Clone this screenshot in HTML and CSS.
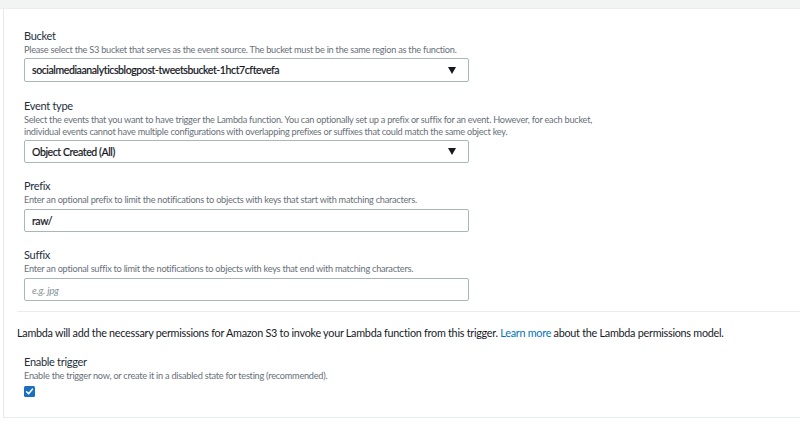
FILE: index.html
```html
<!DOCTYPE html>
<html>
<head>
<meta charset="utf-8">
<link rel="stylesheet" href="styles.css">
</head>
<body>
<div class="topband"></div>
<div class="panel">
  <div class="fields">
    <div class="field f-bucket">
      <div class="label">Bucket</div>
      <div class="desc">Please select the S3 bucket that serves as the event source. The bucket must be in the same region as the function.</div>
      <div class="select">
        <span class="value">socialmediaanalyticsblogpost-tweetsbucket-1hct7cftevefa</span>
        <span class="arrow"></span>
      </div>
    </div>
    <div class="field f-event">
      <div class="label">Event type</div>
      <div class="desc">Select the events that you want to have trigger the Lambda function. You can optionally set up a prefix or suffix for an event. However, for each bucket,<br>individual events cannot have multiple configurations with overlapping prefixes or suffixes that could match the same object key.</div>
      <div class="select">
        <span class="value">Object Created (All)</span>
        <span class="arrow"></span>
      </div>
    </div>
    <div class="field f-prefix">
      <div class="label">Prefix</div>
      <div class="desc">Enter an optional prefix to limit the notifications to objects with keys that start with matching characters.</div>
      <div class="input"><span class="value">raw/</span></div>
    </div>
    <div class="field f-suffix">
      <div class="label">Suffix</div>
      <div class="desc">Enter an optional suffix to limit the notifications to objects with keys that end with matching characters.</div>
      <div class="input"><span class="placeholder">e.g. jpg</span></div>
    </div>
  </div>
  <div class="perm">
    <p class="perm-text">Lambda will add the necessary permissions for Amazon S3 to invoke your Lambda function from this trigger. <a class="link">Learn more</a> about the Lambda permissions model.</p>
    <div class="field f-enable">
      <div class="label">Enable trigger</div>
      <div class="desc">Enable the trigger now, or create it in a disabled state for testing (recommended).</div>
      <div class="checkbox">
        <svg width="11" height="11" viewBox="0 0 11 11"><rect x="0" y="0" width="11" height="11" rx="1.5" fill="#1a6fc0"/><path d="M2.6 5.8 L4.6 7.8 L8.4 3.2" fill="none" stroke="#fff" stroke-width="1.6" stroke-linecap="round" stroke-linejoin="round"/></svg>
      </div>
    </div>
  </div>
</div>
```
FILE: styles.css
```css
html, body {
  margin: 0;
  padding: 0;
  background: #ffffff;
}
body {
  font-family: Lato, "Open Sans", "Liberation Sans", sans-serif;
  color: #232f3e;
  width: 800px;
  height: 424px;
  overflow: hidden;
}
.topband {
  height: 8px;
  background: #f2f3f3;
  border-bottom: 1px solid #eceeee;
}
.panel {
  margin-left: 3px;
  border-left: 1px solid #e6e9e9;
  border-bottom: 1px solid #eaeded;
  height: 409px;
  box-sizing: border-box;
}
.fields {
  margin-left: 13px;
  padding-left: 7px;
  padding-top: 20px;
  padding-bottom: 10px;
  border-bottom: 1px solid #eaeded;
}
.field {
  display: flex;
  flex-direction: column;
}
.label {
  font-size: 11px;
  line-height: 14px;
  letter-spacing: -0.3px;
  color: #232f3e;
}
.desc {
  font-size: 9.2px;
  line-height: 12px;
  letter-spacing: -0.25px;
  color: #687078;
  margin-top: 1px;
}
.select, .input {
  width: 445px;
  height: 23px;
  box-sizing: border-box;
  border: 1px solid #aab7b8;
  border-radius: 2px;
  margin-top: 3px;
  display: flex;
  align-items: center;
  padding: 0 8px 0 7px;
  background: #fff;
}
.f-bucket .select { margin-top: 2px; height: 24px; }
.f-event .select { margin-top: 2px; }
.value {
  font-size: 10.5px;
  font-weight: 500;
  letter-spacing: -0.4px;
  -webkit-text-stroke: 0.15px #16191f;
  color: #16191f;
  flex: 1;
}
.placeholder {
  font-size: 10px;
  font-style: italic;
  letter-spacing: -0.3px;
  color: #879596;
}
.arrow {
  width: 0;
  height: 0;
  border-left: 4.5px solid transparent;
  border-right: 4.5px solid transparent;
  border-top: 7px solid #16191f;
  margin-right: 4px;
}
.f-event { margin-top: 17px; }
.f-prefix { margin-top: 16px; }
.f-suffix { margin-top: 16px; }
.perm {
  margin-left: 13px;
  padding-top: 14px;
}
.perm-text {
  margin: 0;
  font-size: 10.8px;
  line-height: 14px;
  letter-spacing: -0.26px;
  color: #16191f;
}
.link {
  color: #0073bb;
  text-decoration: none;
}
.f-enable {
  margin-left: 7px;
  margin-top: 15px;
}
.checkbox {
  margin-top: 4px;
  height: 11px;
  line-height: 0;
}
```
